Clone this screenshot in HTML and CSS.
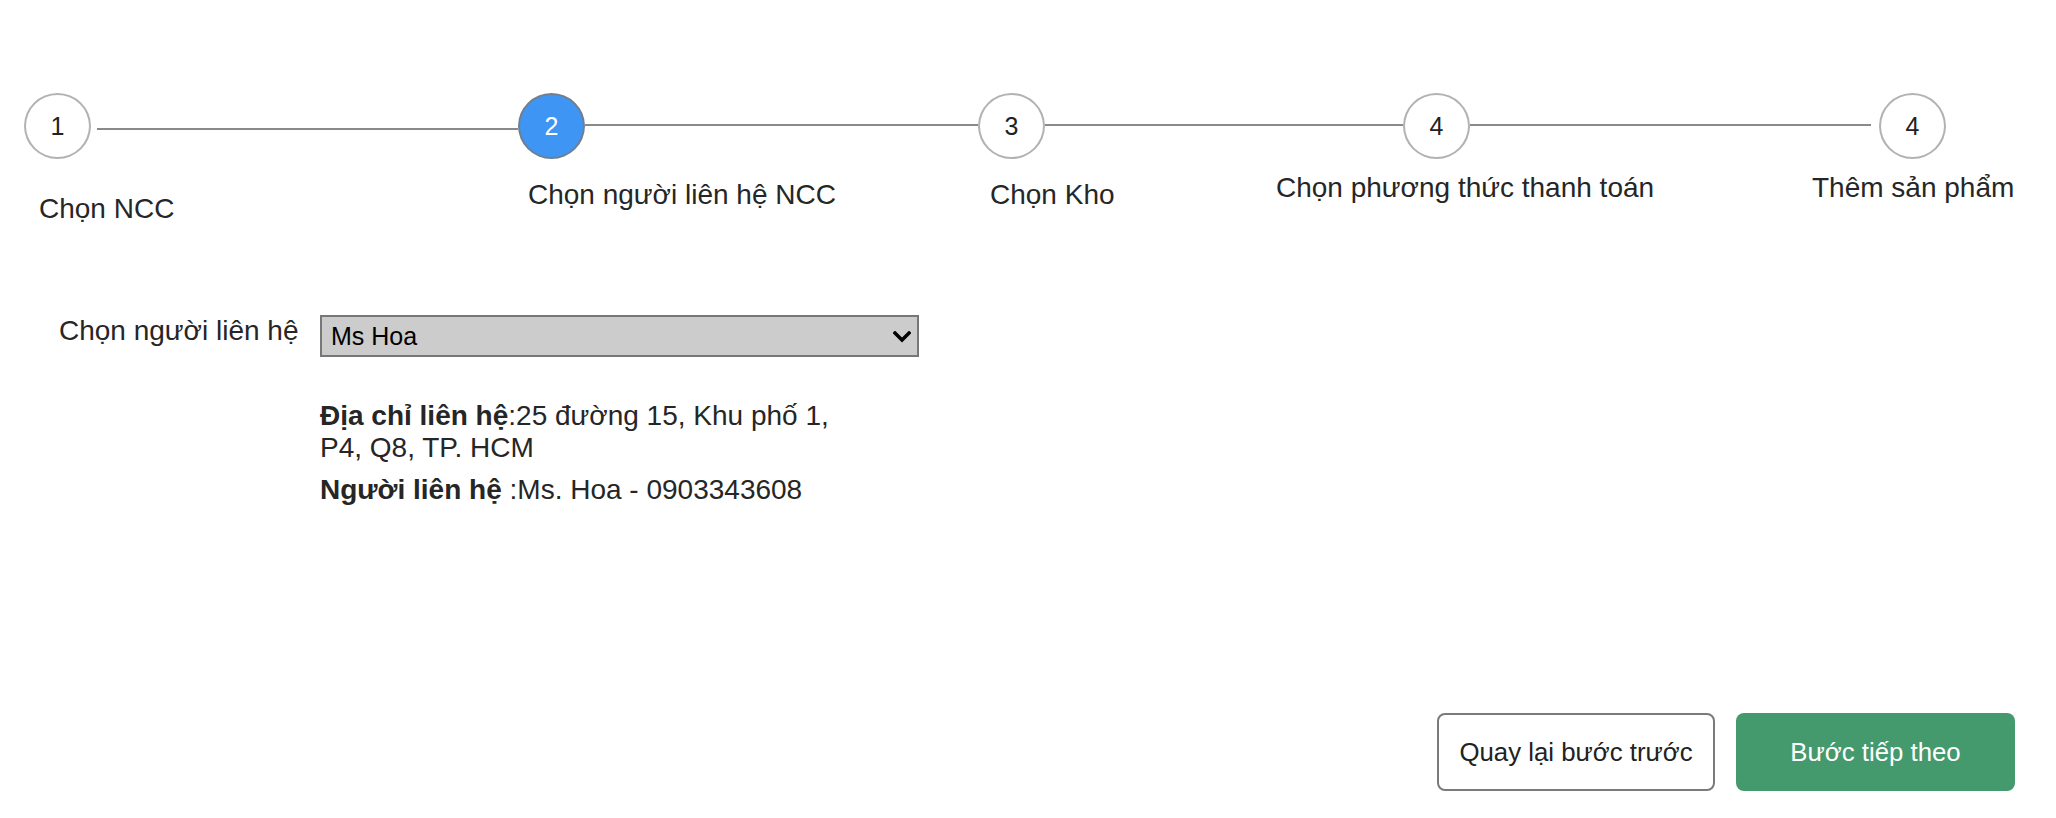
FILE: index.html
```html
<!DOCTYPE html>
<html lang="vi">
<head>
<meta charset="utf-8">
<title>Tạo đơn nhập hàng</title>
<link rel="stylesheet" href="styles.css">
</head>
<body>
<main class="page">
  <ol class="stepper">
    <li class="step step--1">
      <span class="step__circle">1</span>
      <span class="step__label">Chọn NCC</span>
    </li>
    <li class="connector connector--1"></li>
    <li class="step step--2 step--active">
      <span class="step__circle">2</span>
      <span class="step__label">Chọn người liên hệ NCC</span>
    </li>
    <li class="connector connector--2"></li>
    <li class="step step--3">
      <span class="step__circle">3</span>
      <span class="step__label">Chọn Kho</span>
    </li>
    <li class="connector connector--3"></li>
    <li class="step step--4">
      <span class="step__circle">4</span>
      <span class="step__label">Chọn phương thức thanh toán</span>
    </li>
    <li class="connector connector--4"></li>
    <li class="step step--5">
      <span class="step__circle">4</span>
      <span class="step__label">Thêm sản phẩm</span>
    </li>
  </ol>

  <section class="contact-form">
    <label class="contact-form__label" for="contact">Chọn người liên hệ</label>
    <div class="select-wrap">
      <select id="contact" class="select">
        <option>Ms Hoa</option>
      </select>
      <svg class="select-wrap__chevron" width="18" height="12" viewBox="0 0 18 12" aria-hidden="true">
        <path d="M2 2 L9 9 L16 2" fill="none" stroke="#000" stroke-width="3.4" stroke-linecap="square"/>
      </svg>
    </div>
    <div class="contact-info">
      <p><b>Địa chỉ liên hệ</b>:25 đường 15, Khu phố 1, P4, Q8, TP. HCM</p>
      <p><b>Người liên hệ</b> :Ms. Hoa - 0903343608</p>
    </div>
  </section>

  <footer class="actions">
    <button class="btn btn--outline" type="button">Quay lại bước trước</button>
    <button class="btn btn--primary" type="button">Bước tiếp theo</button>
  </footer>
</main>
</body>
</html>
```

FILE: styles.css
```css
* {
  box-sizing: border-box;
}

html, body {
  margin: 0;
  padding: 0;
  background: #ffffff;
}

body {
  font-family: "Liberation Sans", Arial, Helvetica, sans-serif;
  color: #222222;
}

.page {
  display: flex;
  flex-direction: column;
  width: 2056px;
  height: 818px;
  padding: 93px 41px 0 24px;
}

/* ---------- stepper ---------- */
.stepper {
  list-style: none;
  margin: 0;
  padding: 0;
  display: flex;
  align-items: flex-start;
  height: 132px;
}

.step {
  display: flex;
  flex-direction: column;
  align-items: flex-start;
  width: 67px;
  flex: none;
}

.step__circle {
  display: flex;
  align-items: center;
  justify-content: center;
  width: 67px;
  height: 66px;
  border-radius: 50%;
  border: 2px solid #b2b2b2;
  background: #ffffff;
  font-size: 25px;
  color: #222222;
}

.step--active .step__circle {
  background: #3f95f4;
  border-color: #6f7f90;
  color: #ffffff;
}

.step__label {
  white-space: nowrap;
  font-size: 28px;
  line-height: 32px;
  color: #262626;
}

.step--1 .step__label { margin: 34px 0 0 15px; }
.step--2 .step__label { margin: 20px 0 0 10px; }
.step--3 .step__label { margin: 20px 0 0 12px; }
.step--4 .step__label { margin: 13px 0 0 -127px; }
.step--5 .step__label { margin: 13px 0 0 -67px; }

.connector {
  flex: none;
  height: 2px;
  background: #8a8a8a;
  margin-top: 31px;
}

.connector--1 { width: 421px; margin-left: 6px; margin-top: 35px; }
.connector--2 { width: 393px; }
.connector--3 { width: 358px; }
.connector--4 { width: 401px; margin-right: 8px; }

/* ---------- contact form ---------- */
.contact-form {
  display: grid;
  grid-template-columns: 261px 599px;
  grid-template-rows: auto auto;
  row-gap: 43px;
  margin: 90px 0 0 35px;
  align-items: start;
}

.contact-form__label {
  justify-self: start;
  font-size: 28px;
  line-height: 32px;
  color: #262626;
  margin-top: 0;
}

.select-wrap {
  position: relative;
  width: 599px;
  height: 42px;
}

.select {
  appearance: none;
  -webkit-appearance: none;
  width: 100%;
  height: 42px;
  margin: 0;
  padding: 0 40px 0 9px;
  border: 2px solid #777777;
  border-radius: 0;
  background: #cccccc;
  font-family: "Liberation Sans", Arial, Helvetica, sans-serif;
  font-size: 25px;
  color: #000000;
}

.select-wrap__chevron {
  position: absolute;
  right: 8px;
  top: 16px;
  pointer-events: none;
}

.contact-info {
  grid-column: 2;
  width: 540px;
  font-size: 28px;
  line-height: 32px;
  color: #262626;
}

.contact-info p {
  margin: 0;
}

.contact-info p + p {
  margin-top: 10px;
}

/* ---------- actions ---------- */
.actions {
  display: flex;
  justify-content: flex-end;
  gap: 21px;
  margin-top: auto;
  margin-bottom: 27px;
}

.btn {
  height: 78px;
  border-radius: 8px;
  font-family: "Liberation Sans", Arial, Helvetica, sans-serif;
  font-size: 25.8px;
  cursor: pointer;
}

.btn--outline {
  width: 278px;
  background: #ffffff;
  border: 2px solid #7a7a7a;
  color: #222222;
}

.btn--primary {
  width: 279px;
  background: #449a6c;
  border: none;
  color: #ffffff;
}
```
